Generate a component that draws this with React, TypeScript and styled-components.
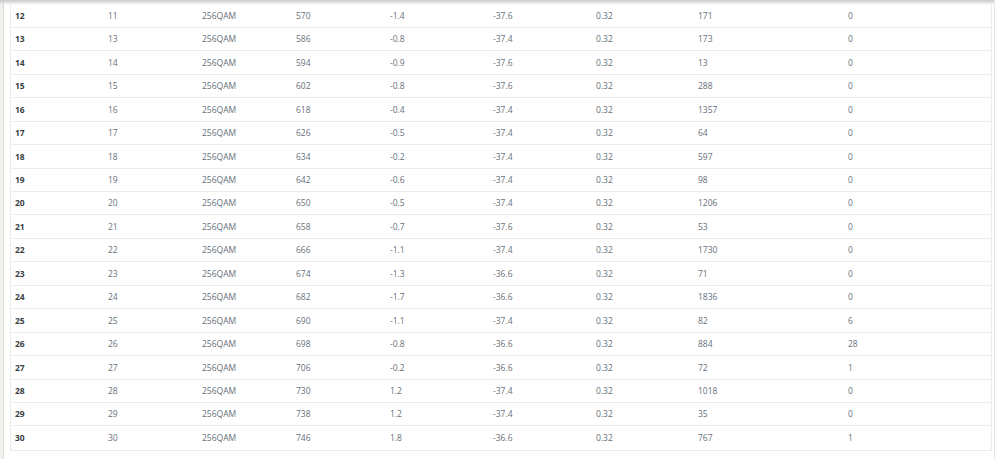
import React from "react";
import styled, { createGlobalStyle } from "styled-components";

const Global = createGlobalStyle`
  html, body { margin: 0; padding: 0; background: #fff; }
  body { font-family: "Open Sans", "Liberation Sans", sans-serif; }
`;

const Page = styled.div`
  display: flex;
  width: 999px;
  height: 459px;
  overflow: hidden;
  background: #fff;
`;

const LeftRail = styled.div`
  width: 3px;
  flex: none;
  background: #f1f1ee;
  border-right: 1px solid #dcdcd8;
`;

const Main = styled.div`
  position: relative;
  flex: none;
  width: 982px;
  padding: 4.5px 2px 0 6px;
  border-right: 1px solid #e6e6e6;
`;

const TopShade = styled.div`
  position: absolute;
  left: -4px;
  right: 0;
  top: 0;
  height: 5px;
  background: linear-gradient(#c9c9c9, rgba(255, 255, 255, 0));
  pointer-events: none;
`;

const Card = styled.div`
  border: 1px solid #ececec;
  border-top: none;
  background: #fff;
`;

const Row = styled.div`
  display: grid;
  grid-template-columns: 93px 94px 94px 94px 103px 103px 102px 150px 1fr;
  height: 23.44px;
  box-sizing: border-box;
  align-items: center;
  border-bottom: 1px solid #ececec;
  &:last-child { border-bottom: none; }
`;

const Cell = styled.div<{ $head?: boolean }>`
  padding-left: 4px;
  padding-top: 1px;
  font-size: 8.5px;
  line-height: 1;
  white-space: nowrap;
  color: ${(p) => (p.$head ? "#3a3f44" : "#66707a")};
  font-weight: ${(p) => (p.$head ? 700 : 400)};
`;

const data: string[][] = [
  ["12", "11", "570", "-1.4", "-37.6", "171", "0"],
  ["13", "13", "586", "-0.8", "-37.4", "173", "0"],
  ["14", "14", "594", "-0.9", "-37.6", "13", "0"],
  ["15", "15", "602", "-0.8", "-37.6", "288", "0"],
  ["16", "16", "618", "-0.4", "-37.4", "1357", "0"],
  ["17", "17", "626", "-0.5", "-37.4", "64", "0"],
  ["18", "18", "634", "-0.2", "-37.4", "597", "0"],
  ["19", "19", "642", "-0.6", "-37.4", "98", "0"],
  ["20", "20", "650", "-0.5", "-37.4", "1206", "0"],
  ["21", "21", "658", "-0.7", "-37.6", "53", "0"],
  ["22", "22", "666", "-1.1", "-37.4", "1730", "0"],
  ["23", "23", "674", "-1.3", "-36.6", "71", "0"],
  ["24", "24", "682", "-1.7", "-36.6", "1836", "0"],
  ["25", "25", "690", "-1.1", "-37.4", "82", "6"],
  ["26", "26", "698", "-0.8", "-36.6", "884", "28"],
  ["27", "27", "706", "-0.2", "-36.6", "72", "1"],
  ["28", "28", "730", "1.2", "-37.4", "1018", "0"],
  ["29", "29", "738", "1.2", "-37.4", "35", "0"],
  ["30", "30", "746", "1.8", "-36.6", "767", "1"],
];

export default function App() {
  return (
    <>
      <Global />
      <Page>
        <LeftRail />
        <Main>
          <TopShade />
          <Card>
            {data.map((r) => (
              <Row key={r[0]}>
                <Cell $head>{r[0]}</Cell>
                <Cell>{r[1]}</Cell>
                <Cell>256QAM</Cell>
                <Cell>{r[2]}</Cell>
                <Cell>{r[3]}</Cell>
                <Cell>{r[4]}</Cell>
                <Cell>0.32</Cell>
                <Cell>{r[5]}</Cell>
                <Cell>{r[6]}</Cell>
              </Row>
            ))}
          </Card>
        </Main>
      </Page>
    </>
  );
}
